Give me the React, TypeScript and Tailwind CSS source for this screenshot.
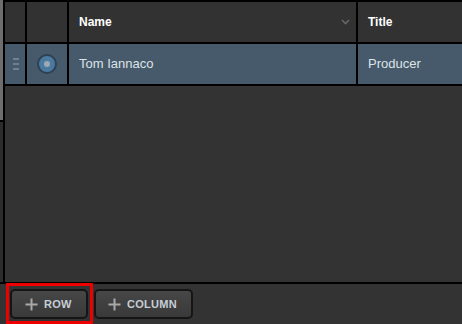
import React from 'react';

const font = { fontFamily: '"Liberation Sans", Arial, sans-serif' };

const Plus: React.FC = () => (
    <svg width="13" height="13" viewBox="0 0 13 13" className="text-[#a9a9a9]">
        <path d="M6.5 0.5v12M0.5 6.5h12" stroke="currentColor" strokeWidth="2" />
    </svg>
);

const GridTable: React.FC = () => {
    return (
        <div className="flex-1 flex flex-col border-t-2 border-black">
            {/* Header row */}
            <div className="flex h-[42px] border-b-2 border-black bg-[#323232]">
                <div className="w-[22px] border-r-2 border-black" />
                <div className="w-[42px] border-r-2 border-black" />
                <div className="w-[289px] border-r-2 border-black flex items-center pl-[10px] pr-[6px]">
                    <span className="flex-1 text-[12px] font-bold text-white">Name</span>
                    <svg width="9" height="6" viewBox="0 0 9 6" className="text-[#676767]">
                        <path d="M1 1l3.5 3.5L8 1" stroke="currentColor" strokeWidth="1.6" fill="none" />
                    </svg>
                </div>
                <div className="flex-1 flex items-center pl-[10px] text-[12px] font-bold text-white">Title</div>
            </div>

            {/* Data row */}
            <div className="flex h-[42px] border-b-2 border-black bg-[#475a6b]">
                <div className="w-[22px] border-r-2 border-black flex flex-col items-center justify-center gap-[3px] pl-[2px]">
                    <div className="w-[6px] h-[2px] bg-[#6e7f90]" />
                    <div className="w-[6px] h-[2px] bg-[#6e7f90]" />
                    <div className="w-[6px] h-[2px] bg-[#6e7f90]" />
                </div>
                <div className="w-[42px] border-r-2 border-black flex items-center justify-center">
                    <div className="w-[20px] h-[20px] rounded-full border-2 border-[#2e4153] bg-[#4b7aa0] flex items-center justify-center">
                        <div className="w-[6px] h-[6px] rounded-full bg-[#9ea8b2]" />
                    </div>
                </div>
                <div className="w-[289px] border-r-2 border-black flex items-center pl-[10px] text-[13px] text-[#dde3e8]">
                    Tom Iannaco
                </div>
                <div className="flex-1 flex items-center pl-[10px] text-[13px] text-[#dde3e8]">Producer</div>
            </div>

            <div className="flex-1 bg-[#333333]" />
        </div>
    );
};

const App: React.FC = () => {
    return (
        <div className="w-[462px] h-[324px] bg-[#333333] flex flex-col overflow-hidden" style={font}>
            <div className="h-[284px] flex border-b-2 border-black">
                {/* Scrollbar */}
                <div className="w-[3px] flex flex-col bg-[#2c2c2c]">
                    <div className="h-[122px] bg-[#6e6e6e] border-b-2 border-black" />
                </div>
                <div className="w-[2px] bg-black" />
                <GridTable />
            </div>

            {/* Footer */}
            <div className="relative flex-1 flex items-center gap-[6px] pl-[10px]">
                <button className="w-[78px] h-[30px] rounded-[5px] border-2 border-[#151515] bg-gradient-to-b from-[#474747] to-[#393939] flex items-center gap-[6px] pl-[13px] text-[11px] font-bold text-[#c6ced6] tracking-wide">
                    <Plus />
                    ROW
                </button>
                <button className="w-[99px] h-[30px] rounded-[5px] border-2 border-[#151515] bg-gradient-to-b from-[#474747] to-[#393939] flex items-center gap-[6px] pl-[12px] text-[11px] font-bold text-[#c6ced6] tracking-wide">
                    <Plus />
                    COLUMN
                </button>
                {/* Highlight annotation */}
                <div className="absolute left-[6px] top-[-1px] w-[87px] h-[41px] border-[3px] border-[#ee0000] pointer-events-none" />
            </div>
        </div>
    );
};

export default App;
